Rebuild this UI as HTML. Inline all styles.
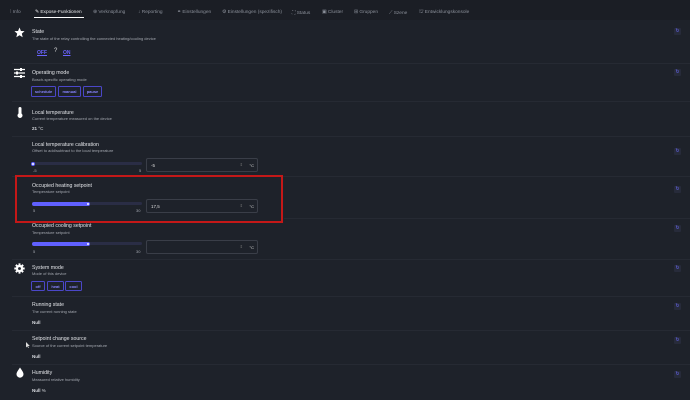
<!DOCTYPE html><html><head><meta charset="utf-8"><style>
*{margin:0;padding:0;box-sizing:border-box}
body{width:690px;height:400px;background:#1e222a;font-family:"Liberation Sans",sans-serif;color:#d8dadf;position:relative;overflow:hidden}
.a{position:absolute;white-space:nowrap}
.tabs{position:absolute;left:0;top:0;width:690px;height:20px;background:#1b1e25}
.tab{font-size:4.8px;color:#8b909a;top:10px}
.t{font-size:5.2px;color:#e2e4e8}
.d{font-size:4px;color:#a4a8b0}
.sep{position:absolute;left:12px;right:0;height:1px;background:#262a33}
.btn{position:absolute;border:1px solid #4b47c8;border-radius:1.5px;font-size:4px;color:#8884ff;text-align:center;line-height:9px;font-weight:bold}
.ref{position:absolute;left:674px;width:7px;height:7px;background:#272b3a;border-radius:1px;color:#6c6cff;font-size:5px;line-height:7px;text-align:center}
.track{position:absolute;left:32px;width:110px;height:3px;background:#2a2d45;border-radius:2px}
.fill{position:absolute;left:0;top:-0.5px;height:4px;background:#6060ff;border-radius:2px}
.knob{position:absolute;width:4px;height:4px;border-radius:50%;background:#fff;border:1px solid #6060ff;top:-0.5px}
.inp{position:absolute;left:146px;width:112px;height:14px;border:1px solid #3a3e48;border-radius:2px;font-size:4.5px;color:#ddd;padding:4px 0 0 4px}
.inp span{position:absolute;right:3px;top:4px;font-size:4px}
.inp i{position:absolute;right:14px;top:3px;font-size:4px;color:#777;font-style:normal}
svg.ic{position:absolute}
b{font-weight:bold}
</style></head><body>
<div class="tabs"></div>
<div class="a tab" style="left:10px">⁞ Info</div>
<div class="a tab" style="left:35px;color:#e8e8ea">✎ Expose-Funktionen</div>
<div class="a" style="left:34px;top:17px;width:50px;height:1px;background:#fff"></div>
<div class="a tab" style="left:93px">⊕ Verknüpfung</div>
<div class="a tab" style="left:138px">↓ Reporting</div>
<div class="a tab" style="left:177px">⚭ Einstellungen</div>
<div class="a tab" style="left:222px">⚙ Einstellungen (spezifisch)</div>
<div class="a tab" style="left:292px">⛶ Status</div>
<div class="a tab" style="left:322px">▣ Cluster</div>
<div class="a tab" style="left:354px">⊞ Gruppen</div>
<div class="a tab" style="left:389px">⟋ Szene</div>
<div class="a tab" style="left:419px">⛫ Entwicklungskonsole</div>

<svg class="ic" style="left:14px;top:27px" width="11" height="11" viewBox="0 0 10 10"><path d="M5 0.5L6.3 3.6 9.6 3.8 7.1 6 7.9 9.3 5 7.5 2.1 9.3 2.9 6 0.4 3.8 3.7 3.6Z" fill="#fff"/></svg>
<div class="a t" style="left:32px;top:29px">State</div>
<div class="a d" style="left:32px;top:36px">The state of the relay controlling the connected heating/cooling device</div>
<div class="a" style="left:37px;top:50px;font-size:5px;color:#6a64ff;font-weight:bold;text-decoration:underline">OFF</div>
<div class="a" style="left:54px;top:48px;font-size:6px;color:#ddd">?</div>
<div class="a" style="left:63px;top:50px;font-size:5px;color:#6a64ff;font-weight:bold;text-decoration:underline">ON</div>
<div class="ref" style="top:28px">↻</div>
<div class="sep" style="top:63px"></div>

<svg class="ic" style="left:14px;top:68px" width="11" height="10" viewBox="0 0 11 10"><g stroke="#fff" stroke-width="1.3"><path d="M0 1.5H11M0 5H11M0 8.5H11"/></g><g fill="#fff"><rect x="6" y="0" width="2" height="3"/><rect x="2" y="3.5" width="2" height="3"/><rect x="6" y="7" width="2" height="3"/></g></svg>
<div class="a t" style="left:32px;top:70px">Operating mode</div>
<div class="a d" style="left:32px;top:77px">Bosch-specific operating mode</div>
<div class="btn" style="left:31px;top:86px;width:25px;height:11px">schedule</div>
<div class="btn" style="left:58px;top:86px;width:23px;height:11px">manual</div>
<div class="btn" style="left:83px;top:86px;width:19px;height:11px">pause</div>
<div class="ref" style="top:69px">↻</div>
<div class="sep" style="top:101px"></div>

<svg class="ic" style="left:17px;top:107px" width="6" height="11" viewBox="0 0 6 11"><path d="M1.5 1.5a1.5 1.5 0 0 1 3 0V6.5a2.5 2.5 0 1 1-3 0Z" fill="#fff"/></svg>
<div class="a t" style="left:32px;top:110px">Local temperature</div>
<div class="a d" style="left:32px;top:116px">Current temperature measured on the device</div>
<div class="a" style="left:32px;top:126px;font-size:4.5px"><b>21</b> °C</div>
<div class="sep" style="top:136px"></div>

<div class="a t" style="left:32px;top:142px">Local temperature calibration</div>
<div class="a d" style="left:32px;top:148px">Offset to add/subtract to the local temperature</div>
<div class="track" style="top:162px"><div class="knob" style="left:-1px"></div></div>
<div class="a d" style="left:33px;top:168px">-5</div><div class="a d" style="left:139px;top:168px">5</div>
<div class="inp" style="top:158px">-5<i>⇕</i><span>°C</span></div>
<div class="ref" style="top:148px">↻</div>
<div class="sep" style="top:176px"></div>

<div class="a t" style="left:32px;top:183px">Occupied heating setpoint</div>
<div class="a d" style="left:32px;top:189px">Temperature setpoint</div>
<div class="track" style="top:202px"><div class="fill" style="width:57px"></div><div class="knob" style="left:54px"></div></div>
<div class="a d" style="left:33px;top:208px">5</div><div class="a d" style="left:136px;top:208px">30</div>
<div class="inp" style="top:199px">17,5<i>⇕</i><span>°C</span></div>
<div class="ref" style="top:186px">↻</div>
<div class="a" style="left:15px;top:175px;width:268px;height:48px;border:2px solid #c41818"></div>
<div class="sep" style="top:218px;left:284px"></div>

<div class="a t" style="left:32px;top:223px">Occupied cooling setpoint</div>
<div class="a d" style="left:32px;top:230px">Temperature setpoint</div>
<div class="track" style="top:242px"><div class="fill" style="width:57px"></div><div class="knob" style="left:54px"></div></div>
<div class="a d" style="left:33px;top:249px">5</div><div class="a d" style="left:136px;top:249px">30</div>
<div class="inp" style="top:240px"><i>⇕</i><span>°C</span></div>
<div class="ref" style="top:225px">↻</div>
<div class="sep" style="top:259px"></div>

<svg class="ic" style="left:14px;top:263px" width="11" height="11" viewBox="0 0 10 10"><g fill="#fff"><circle cx="5" cy="5" r="3.3"/><g stroke="#fff" stroke-width="1.8"><path d="M5 0.3V9.7M0.3 5H9.7M1.7 1.7L8.3 8.3M8.3 1.7L1.7 8.3"/></g></g><circle cx="5" cy="5" r="1.3" fill="#1e222a"/></svg>
<div class="a t" style="left:32px;top:265px">System mode</div>
<div class="a d" style="left:32px;top:271px">Mode of this device</div>
<div class="btn" style="left:31px;top:281px;width:14px;height:10px">off</div>
<div class="btn" style="left:47px;top:281px;width:17px;height:10px">heat</div>
<div class="btn" style="left:65px;top:281px;width:17px;height:10px">cool</div>
<div class="ref" style="top:265px">↻</div>
<div class="sep" style="top:296px"></div>

<div class="a t" style="left:32px;top:302px">Running state</div>
<div class="a d" style="left:32px;top:309px">The current running state</div>
<div class="a" style="left:32px;top:320px;font-size:4.5px"><b>Null</b></div>
<div class="ref" style="top:303px">↻</div>
<div class="sep" style="top:330px"></div>

<div class="a t" style="left:32px;top:336px">Setpoint change source</div>
<div class="a d" style="left:32px;top:343px">Source of the current setpoint temperature</div>
<div class="a" style="left:32px;top:354px;font-size:4.5px"><b>Null</b></div>
<svg class="ic" style="left:26px;top:342px" width="4" height="6" viewBox="0 0 4 6"><path d="M0 0V5.5L1.3 4.2 2.2 6 2.9 5.7 2 4H3.8Z" fill="#ddd"/></svg>
<div class="ref" style="top:337px">↻</div>
<div class="sep" style="top:364px"></div>

<svg class="ic" style="left:16px;top:367px" width="8" height="11" viewBox="0 0 8 11"><path d="M4 0.5C2.5 3 0.5 5 0.5 7.2a3.5 3.5 0 0 0 7 0C7.5 5 5.5 3 4 0.5Z" fill="#fff"/></svg>
<div class="a t" style="left:32px;top:370px">Humidity</div>
<div class="a d" style="left:32px;top:377px">Measured relative humidity</div>
<div class="a" style="left:32px;top:388px;font-size:4.5px"><b>Null</b> %</div>
<div class="ref" style="top:371px">↻</div>
</body></html>
